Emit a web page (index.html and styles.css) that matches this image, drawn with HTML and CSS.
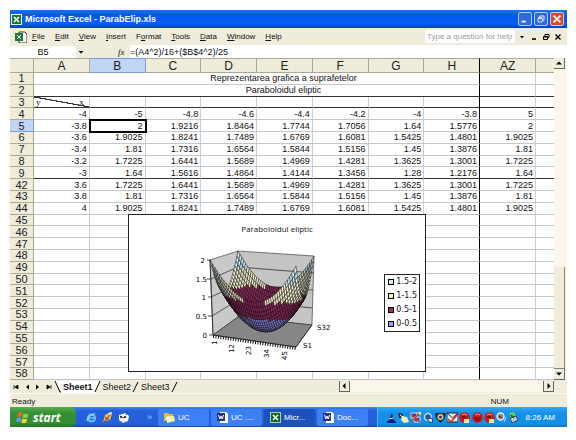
FILE: index.html
```html
<!DOCTYPE html>
<html lang="en">
<head>
    <meta charset="UTF-8">
    <meta name="viewport" content="width=device-width, initial-scale=1.0">
    <title>Microsoft Excel - ParabElip.xls</title>
    <link rel="stylesheet" href="styles.css">
</head>
<body>
    <div class="screen">
        <header class="title-bar">
            <svg class="icon" viewBox="0 0 11 11"><rect width="11" height="11" fill="#e8f4e4"/><rect x="1" y="1" width="9" height="9" fill="#1c7a34"/><path d="M3 3l5 5M8 3L3 8" stroke="#fff" stroke-width="1.6"/></svg>
            <h1>Microsoft Excel - ParabElip.xls</h1>
            <button class="win-btn" aria-label="Minimize"><svg viewBox="0 0 14 14"><path d="M3 10h5" stroke="#fff" stroke-width="2"/></svg></button>
            <button class="win-btn" aria-label="Restore"><svg viewBox="0 0 14 14"><path d="M5.500 5V3.500h5v5H9M3.500 6.500h5v4h-5zM3.500 5.500h5" fill="none" stroke="#fff"/></svg></button>
            <button class="win-btn close" aria-label="Close"><svg viewBox="0 0 14 14"><path d="M3 3l8 8M11 3l-8 8" stroke="#fff" stroke-width="2"/></svg></button>
        </header>

        <nav class="menu-bar">
            <svg class="icon" viewBox="0 0 12 12"><path d="M4 1h6l2 2v9H4z" fill="#fff" stroke="#333"/><rect y="2" width="8" height="8" fill="#1c7a34"/><path d="M2 4l4 4M6 4L2 8" stroke="#fff"/></svg>
            <button><u>F</u>ile</button>
            <button><u>E</u>dit</button>
            <button><u>V</u>iew</button>
            <button><u>I</u>nsert</button>
            <button>F<u>o</u>rmat</button>
            <button><u>T</u>ools</button>
            <button><u>D</u>ata</button>
            <button><u>W</u>indow</button>
            <button><u>H</u>elp</button>
            <input class="question" type="text" placeholder="Type a question for help" aria-label="Type a question for help">
            <button class="mini" aria-label="Show questions"><svg viewBox="0 0 8 8"><path d="M2 3h4L4 5.500z"/></svg></button>
            <button class="mini" aria-label="Minimize workbook"><svg viewBox="0 0 8 8"><path d="M2 6h4" stroke="#000" stroke-width="1.600"/></svg></button>
            <button class="mini" aria-label="Restore workbook"><svg viewBox="0 0 8 8"><path d="M3 3V1.500h4v3H6M1.500 3.500h4v3h-4zM1.500 4h4M3 1.500h4" fill="none" stroke="#000"/></svg></button>
            <button class="mini" aria-label="Close workbook"><svg viewBox="0 0 8 8"><path d="M1.500 1.500l5 5M6.500 1.500l-5 5" stroke="#000" stroke-width="1.400"/></svg></button>
        </nav>

        <div class="formula-bar">
            <input class="name-box" type="text" value="B5" aria-label="Name box">
            <button class="mini" aria-label="Show names"><svg viewBox="0 0 8 8"><path d="M1.500 3h5L4 5.500z"/></svg></button>
            <label class="fx" for="formula"><i>fx</i></label>
            <input class="formula" id="formula" type="text" value="=(A4^2)/16+($B$4^2)/25">
        </div>

        <main class="workbook">
            <div class="sheet">
                <table class="grid">
                    <colgroup>
                        <col class="col-head"><col><col><col><col><col><col><col><col><col><col class="col-rest">
                    </colgroup>
                    <thead>
                        <tr><th></th><th>A</th><th class="active">B</th><th>C</th><th>D</th><th>E</th><th>F</th><th>G</th><th class="freeze">H</th><th>AZ</th><th></th></tr>
                    </thead>
                    <tbody>
                        <tr><th>1</th><td class="merged freeze" colspan="8">Reprezentarea grafica a suprafetelor</td><td></td><td></td></tr>
                        <tr class="line"><th>2</th><td class="merged freeze" colspan="8">Paraboloidul eliptic</td><td></td><td></td></tr>
                        <tr class="line"><th>3</th><td class="corner"><div><span>y</span><span>x</span></div></td><td></td><td></td><td></td><td></td><td></td><td></td><td class="freeze"></td><td></td><td></td></tr>
                        <tr><th>4</th><td>-4</td><td>-5</td><td>-4.8</td><td>-4.6</td><td>-4.4</td><td>-4.2</td><td>-4</td><td class="freeze">-3.8</td><td>5</td><td></td></tr>
                        <tr><th class="active">5</th><td>-3.8</td><td class="selected">2</td><td>1.9216</td><td>1.8464</td><td>1.7744</td><td>1.7056</td><td>1.64</td><td class="freeze">1.5776</td><td>2</td><td></td></tr>
                        <tr><th>6</th><td>-3.6</td><td>1.9025</td><td>1.8241</td><td>1.7489</td><td>1.6769</td><td>1.6081</td><td>1.5425</td><td class="freeze">1.4801</td><td>1.9025</td><td></td></tr>
                        <tr><th>7</th><td>-3.4</td><td>1.81</td><td>1.7316</td><td>1.6564</td><td>1.5844</td><td>1.5156</td><td>1.45</td><td class="freeze">1.3876</td><td>1.81</td><td></td></tr>
                        <tr><th>8</th><td>-3.2</td><td>1.7225</td><td>1.6441</td><td>1.5689</td><td>1.4969</td><td>1.4281</td><td>1.3625</td><td class="freeze">1.3001</td><td>1.7225</td><td></td></tr>
                        <tr class="line"><th>9</th><td>-3</td><td>1.64</td><td>1.5616</td><td>1.4864</td><td>1.4144</td><td>1.3456</td><td>1.28</td><td class="freeze">1.2176</td><td>1.64</td><td></td></tr>
                        <tr><th>42</th><td>3.6</td><td>1.7225</td><td>1.6441</td><td>1.5689</td><td>1.4969</td><td>1.4281</td><td>1.3625</td><td class="freeze">1.3001</td><td>1.7225</td><td></td></tr>
                        <tr><th>43</th><td>3.8</td><td>1.81</td><td>1.7316</td><td>1.6564</td><td>1.5844</td><td>1.5156</td><td>1.45</td><td class="freeze">1.3876</td><td>1.81</td><td></td></tr>
                        <tr><th>44</th><td>4</td><td>1.9025</td><td>1.8241</td><td>1.7489</td><td>1.6769</td><td>1.6081</td><td>1.5425</td><td class="freeze">1.4801</td><td>1.9025</td><td></td></tr>
                        <tr><th>45</th><td></td><td></td><td></td><td></td><td></td><td></td><td></td><td class="freeze"></td><td></td><td></td></tr>
                        <tr><th>46</th><td></td><td></td><td></td><td></td><td></td><td></td><td></td><td class="freeze"></td><td></td><td></td></tr>
                        <tr><th>47</th><td></td><td></td><td></td><td></td><td></td><td></td><td></td><td class="freeze"></td><td></td><td></td></tr>
                        <tr><th>48</th><td></td><td></td><td></td><td></td><td></td><td></td><td></td><td class="freeze"></td><td></td><td></td></tr>
                        <tr><th>49</th><td></td><td></td><td></td><td></td><td></td><td></td><td></td><td class="freeze"></td><td></td><td></td></tr>
                        <tr><th>50</th><td></td><td></td><td></td><td></td><td></td><td></td><td></td><td class="freeze"></td><td></td><td></td></tr>
                        <tr><th>51</th><td></td><td></td><td></td><td></td><td></td><td></td><td></td><td class="freeze"></td><td></td><td></td></tr>
                        <tr><th>52</th><td></td><td></td><td></td><td></td><td></td><td></td><td></td><td class="freeze"></td><td></td><td></td></tr>
                        <tr><th>53</th><td></td><td></td><td></td><td></td><td></td><td></td><td></td><td class="freeze"></td><td></td><td></td></tr>
                        <tr><th>54</th><td></td><td></td><td></td><td></td><td></td><td></td><td></td><td class="freeze"></td><td></td><td></td></tr>
                        <tr><th>55</th><td></td><td></td><td></td><td></td><td></td><td></td><td></td><td class="freeze"></td><td></td><td></td></tr>
                        <tr><th>56</th><td></td><td></td><td></td><td></td><td></td><td></td><td></td><td class="freeze"></td><td></td><td></td></tr>
                        <tr><th>57</th><td></td><td></td><td></td><td></td><td></td><td></td><td></td><td class="freeze"></td><td></td><td></td></tr>
                        <tr><th>58</th><td></td><td></td><td></td><td></td><td></td><td></td><td></td><td class="freeze"></td><td></td><td></td></tr>
                    </tbody>
                </table>

                <figure class="chart">
                    <figcaption>Paraboloidul eliptic</figcaption>
                    <div class="chart-body">
                        <svg class="plot" viewBox="0 0 150 115">
                            <!-- walls and floor -->
                            <path d="M20 14L48 5V71L23 89z" fill="#c9c9c9" stroke="#444" stroke-width=".7"/>
                            <path d="M48 5L124 10L122 79L48 71z" fill="#c4c4c4" stroke="#444" stroke-width=".7"/>
                            <path d="M23 89L48 71L122 79L106 101z" fill="#868686" stroke="#333" stroke-width=".7"/>
                            <path d="M22 70L48 54L122 62M21 51L48 38L123 44M21 33L48 21L124 27" fill="none" stroke="#333" stroke-width=".8"/>
                            <g id="surface"></g>
                            <path d="M20 14L23 89L106 101L122 79M17 14h4M17 33h4M18 51h4M18 70h4M19 89h4" fill="none" stroke="#222" stroke-width=".8"/>
                            <path d="M23 90.500L106 102.500" stroke="#111" stroke-width="3" stroke-dasharray="1 1.500"/>
                            <g class="axis">
                                <text x="15" y="17" text-anchor="end">2</text>
                                <text x="17" y="36" text-anchor="end">1.5</text>
                                <text x="16" y="54" text-anchor="end">1</text>
                                <text x="17" y="73" text-anchor="end">0.5</text>
                                <text x="17" y="92" text-anchor="end">0</text>
                                <text transform="translate(27 99) rotate(-90)">1</text>
                                <text transform="translate(44 107) rotate(-90)">12</text>
                                <text transform="translate(61 109) rotate(-90)">23</text>
                                <text transform="translate(79 112) rotate(-90)">34</text>
                                <text transform="translate(97 114) rotate(-90)">45</text>
                                <text x="113" y="102">S1</text>
                                <text x="127" y="84">S32</text>
                            </g>
                        </svg>
                        <ul class="legend">
                            <li><span class="key k4"></span>1.5-2</li>
                            <li><span class="key k3"></span>1-1.5</li>
                            <li><span class="key k2"></span>0.5-1</li>
                            <li><span class="key k1"></span>0-0.5</li>
                        </ul>
                    </div>
                </figure>
            </div>
            <div class="v-scroll">
                <button class="scroll-btn" aria-label="Scroll up"><svg viewBox="0 0 8 8"><path d="M1 5.500h6L4 2.500z"/></svg></button>
                <div class="v-track"><div class="v-thumb"></div></div>
                <button class="scroll-btn" aria-label="Scroll down"><svg viewBox="0 0 8 8"><path d="M1 2.500h6L4 5.500z"/></svg></button>
            </div>
        </main>

        <div class="tab-bar">
            <button class="mini" aria-label="First sheet"><svg viewBox="0 0 8 8"><path d="M2 2v4M6 2v4L3 4z" stroke="#000" stroke-width=".8"/></svg></button>
            <button class="mini" aria-label="Previous sheet"><svg viewBox="0 0 8 8"><path d="M6 1.500v5L3 4z"/></svg></button>
            <button class="mini" aria-label="Next sheet"><svg viewBox="0 0 8 8"><path d="M2 1.500v5L5 4z"/></svg></button>
            <button class="mini" aria-label="Last sheet"><svg viewBox="0 0 8 8"><path d="M6 2v4M2 2v4L5 4z" stroke="#000" stroke-width=".8"/></svg></button>
            <svg class="slant" viewBox="0 0 7 12"><path d="M0 0h7v12z" fill="#fff"/><path d="M1 0l5 11h1" fill="none" stroke="#000"/></svg>
            <button class="tab current">Sheet1</button>
            <svg class="slant" viewBox="0 0 7 12"><path d="M0 0h6L1 12H0z" fill="#fff"/><path d="M6 0L1 11" stroke="#000"/></svg>
            <button class="tab">Sheet2</button>
            <svg class="slant" viewBox="0 0 7 12"><path d="M6 1L1 11" stroke="#000"/></svg>
            <button class="tab">Sheet3</button>
            <svg class="slant" viewBox="0 0 7 12"><path d="M6 1L1 11" stroke="#000"/></svg>
            <div class="h-scroll">
                <button class="scroll-btn" aria-label="Scroll left"><svg viewBox="0 0 8 8"><path d="M5.500 1v6L2.500 4z"/></svg></button>
                <div class="h-track"></div>
                <button class="scroll-btn" aria-label="Scroll right"><svg viewBox="0 0 8 8"><path d="M2.500 1v6L5.500 4z"/></svg></button>
            </div>
        </div>

        <div class="status-bar">
            <span>Ready</span>
            <span class="num">NUM</span>
        </div>

        <footer class="taskbar">
            <button class="start">
                <svg viewBox="0 0 14 13"><path d="M2 2q2.500-1.500 4.500 0L5.500 6Q3.500 5 1 6z" fill="#f0602c"/><path d="M7.500 2.300q2.500 1.200 5 0L11.500 6.500q-2.500 1-5 0z" fill="#8cd040"/><path d="M.8 7q2.500-1.200 4.500 0L4.300 11Q2.500 10-.2 11z" fill="#5a9cf8"/><path d="M6.300 7.400q2.500 1.200 5 0L10.300 11.500q-2.500 1-5 0z" fill="#fcd030"/></svg>
                start
            </button>
            <div class="quick">
                <svg viewBox="0 0 11 11"><circle cx="5.500" cy="6" r="3.500" fill="none" stroke="#6cc4fc" stroke-width="2"/><path d="M3 6h6" stroke="#6cc4fc" stroke-width="1.500"/><path d="M1 9Q0 5 9 1.500" fill="none" stroke="#b8e8ff"/></svg>
                <svg viewBox="0 0 11 11"><path d="M1 10l2-7 4-2 3 1-2 6-4 1z" fill="#f6b44a"/><path d="M2 10L9 2M3 5l4 3" stroke="#7a3c10"/><path d="M6 1l4-1-1 3z" fill="#fff"/></svg>
                <svg viewBox="0 0 11 11"><path d="M1 3l7-2 3 3-1 5-5 2-4-3z" fill="#f4f4f0"/><path d="M2 4l3 2 3-1M8 3l2-3" stroke="#333" fill="none"/><circle cx="3" cy="5" r="1" fill="#222"/><circle cx="7" cy="5" r="1" fill="#222"/></svg>
                <span>»</span>
            </div>
            <button class="task">
                <svg viewBox="0 0 11 11"><path d="M0 1h4l1 1h4v7H0z" fill="#e8b83c"/><path d="M3 4h7l1 5-8 2z" fill="#fff0a0"/><path d="M2 5h4v3H2z" fill="#fff"/></svg>UC
            </button>
            <button class="task">
                <svg viewBox="0 0 11 11"><path d="M3 0h6l2 2v9H3z" fill="#fff"/><rect y="1" width="8" height="8" fill="#26348c"/><path d="M1.500 3l1.300 4L4 4l1.200 3 1.300-4" fill="none" stroke="#fff"/></svg>UC ....
            </button>
            <button class="task pressed">
                <svg viewBox="0 0 11 11"><rect width="11" height="11" fill="#a8d8a0"/><rect x="1" y="1" width="9" height="9" fill="#14642c"/><path d="M3 3l5 5M8 3L3 8" stroke="#fff" stroke-width="1.500"/></svg>Micr...
            </button>
            <button class="task">
                <svg viewBox="0 0 11 11"><path d="M3 0h6l2 2v9H3z" fill="#fff"/><rect y="1" width="8" height="8" fill="#26348c"/><path d="M1.500 3l1.300 4L4 4l1.200 3 1.300-4" fill="none" stroke="#fff"/></svg>Doc...
            </button>
            <div class="tray">
                <svg viewBox="0 0 11 11"><path d="M2 11l1-4 3-6 1 5 2 5z" fill="#101c80"/><path d="M1 10h9" stroke="#101c80" stroke-width="2"/><path d="M3 7l4-1" stroke="#fff"/></svg>
                <svg viewBox="0 0 11 11"><path d="M0 1l5 1v4H1z" fill="#333"/><path d="M4 4l5 1 2 5-5 1-3-3z" fill="#f4f0a8"/><path d="M2 3l4 3" stroke="#fff"/></svg>
                <svg viewBox="0 0 11 11"><path d="M1 1h6v5H1zM4 5h6v5H4z" fill="#3048b0" stroke="#dde"/><path d="M1 10L10 1M1 2l9 8" stroke="#e83020" stroke-width="1.200"/><path d="M7 0h4v4z" fill="#fce040"/></svg>
                <svg viewBox="0 0 11 11"><circle cx="5" cy="5" r="3.500" fill="#2050b8" stroke="#b8dcf8" stroke-width="1.500"/><path d="M5 6l5 1-1 4-4-2z" fill="#d8e8f4" stroke="#246"/></svg>
                <svg viewBox="0 0 11 11"><path d="M0 1h11L10 6l-4.500 5L1 6z" fill="#1c2c50"/><circle cx="5.500" cy="5" r="3" fill="#e8d050"/><circle cx="5.500" cy="5" r="1.600" fill="#1838c0"/></svg>
                <svg viewBox="0 0 11 11"><rect y="1" width="11" height="9" fill="#eee" stroke="#222"/><path d="M0 1l5.500 5L11 1" fill="none" stroke="#222"/><path d="M1 7l3 3 7-8" fill="none" stroke="#e01818" stroke-width="1.300"/></svg>
                <svg viewBox="0 0 11 11"><circle cx="5.500" cy="5.500" r="5.200" fill="#c81818"/><path d="M3 3q2-2 5 0" stroke="#f8a090" fill="none"/><path d="M5 7h5v4H5z" fill="#f8e890"/><path d="M3 5h4" stroke="#400"/></svg>
                <svg viewBox="0 0 11 11"><circle cx="5.500" cy="5.500" r="5.200" fill="#c81818"/><path d="M3 3q2-2 5 0" stroke="#f8a090" fill="none"/><path d="M2 6h7M3 8h5" stroke="#600"/></svg>
                <svg viewBox="0 0 11 11"><circle cx="5.500" cy="5.500" r="5.200" fill="#c81818"/><path d="M3 3q2-2 5 0" stroke="#f8a090" fill="none"/><path d="M5 7h5v4H5z" fill="#f8e890"/><path d="M3 5h4" stroke="#400"/></svg>
                <svg viewBox="0 0 11 11"><circle cx="4.500" cy="4.500" r="3.500" fill="#888" stroke="#e4e4e4" stroke-width="1.500"/><path d="M3 4l3 2" stroke="#222"/><path d="M8 10l2-5" stroke="#b8e0ff"/></svg>
                <svg viewBox="0 0 11 11"><path d="M1 1l5-1 2 4-5 2z" fill="#60d060"/><path d="M2 6l6-2 2 4-6 3z" fill="#c8ccd0" stroke="#345"/><path d="M3 3l3 3" stroke="#186018" stroke-width="1.500"/></svg>
                <time>8:26 AM</time>
            </div>
        </footer>
    </div>

    <script>
        // z = x^2/25 + y^2/16 drawn as a mesh, far rows first
        var surface = document.getElementById("surface");
        var cols = 40, rows = 26;
        var colors = ["#8484dc", "#8c2454", "#f2f0cc", "#cfeaf0"];

        function height(u, v) {
            var x = -5 + 10 * u;
            var y = -4 + 8 * v;
            return x * x / 25 + y * y / 16;
        }

        function mix(a, b, c, d, u, v) {
            return (1 - v) * ((1 - u) * a + u * b) + v * ((1 - u) * c + u * d);
        }

        function point(i, j) {
            var u = i / cols, v = j / rows;
            var px = mix(23, 106, 48, 122, u, v) + height(u, v) / 2 * mix(-3, 0, 0, 2, u, v);
            var py = mix(89, 101, 71, 79, u, v) - height(u, v) / 2 * mix(75, 81, 66, 69, u, v);
            return px.toFixed(1) + "," + py.toFixed(1);
        }

        var mesh = "";
        for (var j = rows - 1; j >= 0; j--) {
            for (var i = 0; i < cols; i++) {
                var z = height((i + 0.5) / cols, (j + 0.5) / rows);
                var color = colors[Math.min(3, Math.floor(z * 2))];
                mesh += `<polygon points="${point(i, j)} ${point(i + 1, j)} ${point(i + 1, j + 1)} ${point(i, j + 1)}" fill="${color}"/>`;
            }
        }
        surface.innerHTML = mesh;
    </script>
</body>
</html>
```
FILE: styles.css
```css
* {
    box-sizing: border-box;
}

body {
    margin: 0;
    padding: 10px 9px 13px 10px;
    height: 100vh;
    background-color: #fff;
    font-family: "Liberation Sans", Arial, sans-serif;
    font-size: 9px;
    color: #111;
}

button,
input {
    margin: 0;
    padding: 0;
    border: none;
    border-radius: 0;
    background: none;
    font: inherit;
    color: inherit;
    outline: none;
}

svg {
    display: block;
    flex: none;
}

.screen {
    display: flex;
    flex-direction: column;
    height: 100%;
    background-color: #efecdc;
}

/* title bar */
.title-bar {
    display: flex;
    align-items: center;
    gap: 2px;
    height: 18px;
    padding: 0 3px 0 1px;
    background: linear-gradient(#1474f4, #0458ec 30%, #0560f4 75%, #0440c0);
    color: #fff;
}

.title-bar h1 {
    flex: 1;
    margin: 0 0 0 1px;
    font-size: 9px;
    font-weight: bold;
}

.icon {
    width: 11px;
    height: 11px;
}

.win-btn {
    width: 14px;
    height: 14px;
    border: 1px solid #b4ccf8;
    border-radius: 2px;
    background-color: #2f68e0;
}

.win-btn svg {
    width: 12px;
    height: 12px;
}

.win-btn.close {
    background-color: #dc4a24;
}

/* menu */
.menu-bar {
    display: flex;
    align-items: center;
    gap: 10px;
    height: 17px;
    padding: 0 4px 0 5px;
    font-size: 8px;
}

.menu-bar .icon {
    width: 12px;
    height: 12px;
    margin-right: -5px;
}

.menu-bar .mini {
    margin-left: -8px;
}

.question {
    width: 90px;
    height: 13px;
    margin-left: auto;
    padding-left: 2px;
    background-color: #fff;
}

.question::placeholder {
    color: #999;
}

.mini {
    width: 10px;
    height: 10px;
    flex: none;
}

.mini svg {
    width: 8px;
    height: 8px;
    margin: 0 auto;
}

/* name box and formula */
.formula-bar {
    display: flex;
    align-items: center;
    height: 13px;
}

.name-box {
    width: 66px;
    height: 12px;
    background-color: #fff;
    text-align: center;
}

.fx {
    margin-left: 32px;
    width: 12px;
    font-family: "Liberation Serif", serif;
}

.formula {
    flex: 1;
    height: 13px;
    background-color: #fff;
}

/* sheet */
.workbook {
    flex: 1;
    display: flex;
    min-height: 0;
}

.sheet {
    position: relative;
    flex: 1;
    background-color: #fff;
    overflow: hidden;
}

.grid {
    width: 100%;
    height: 100%;
    table-layout: fixed;
    border-spacing: 0;
    line-height: 10px;
}

.col-head {
    width: 24px;
}

.col-rest {
    width: 18px;
}

.grid th,
.grid td {
    padding: 0;
    border-right: 1px solid #cdcfd3;
    border-bottom: 1px solid #c3c7cc;
    white-space: nowrap;
}

.grid th {
    background-color: #efecdc;
    border-color: #aca894;
    font-size: 11px;
    font-weight: normal;
    color: #222;
}

.grid thead th {
    height: 15px;
    border-top: 1px solid #aca894;
    font-size: 12px;
}

.grid td {
    padding-right: 2px;
    text-align: right;
}

.grid th:last-child,
.grid td:last-child {
    border-right: none;
}

.grid th.active {
    background-color: #c0d4f4;
    border-color: #7c9cd4;
}

.grid .freeze {
    border-right: 1px solid #000;
}

.grid .line td {
    border-bottom-color: #333;
}

.grid td.merged {
    padding-left: 56px;
    text-align: center;
}

.grid td.corner {
    padding: 0;
    background: linear-gradient(to top right, transparent 47%, #333 48%, #333 53%, transparent 54%);
}

.corner div {
    display: flex;
    justify-content: space-between;
    padding: 0 5px 0 2px;
    font-family: "Liberation Serif", serif;
}

.grid td.selected {
    outline: 2px solid #000;
    outline-offset: -1px;
}

/* chart */
.chart {
    position: absolute;
    left: 118px;
    top: 156px;
    width: 298px;
    height: 158px;
    margin: 0;
    padding-top: 8px;
    display: flex;
    flex-direction: column;
    border: 1px solid #222;
    background-color: #fff;
}

.chart figcaption {
    font-family: "Open Sans", sans-serif;
    font-size: 8px;
    line-height: 12px;
    text-align: center;
}

.chart-body {
    flex: 1;
    display: flex;
    align-items: center;
    justify-content: space-between;
    padding: 0 5px 0 61px;
}

.plot {
    width: 150px;
    height: 115px;
    overflow: visible;
}

#surface polygon {
    stroke: #111;
    stroke-width: .5px;
}

.axis {
    font-family: "DejaVu Sans", sans-serif;
    font-size: 7px;
}

.legend {
    margin: 0;
    padding: 0 2px 0 3px;
    list-style: none;
    border: 1px solid #222;
    font-family: "DejaVu Sans", sans-serif;
    font-size: 8px;
    line-height: 14px;
}

.legend li {
    display: flex;
    align-items: center;
    gap: 2px;
}

.key {
    width: 6px;
    height: 6px;
    border: 1px solid #000;
}

.k4 { background-color: #cfeaf0; }
.k3 { background-color: #f2f0b8; }
.k2 { background-color: #a02860; }
.k1 { background-color: #9c9cf4; }

/* scrollbars */
.v-scroll {
    display: flex;
    flex-direction: column;
    width: 13px;
    padding-right: 2px;
    background-color: #faf7ea;
}

.scroll-btn {
    width: 11px;
    height: 11px;
    flex: none;
    border-right: 1px solid #666;
    border-bottom: 1px solid #666;
    background-color: #efecdc;
}

.scroll-btn svg {
    width: 8px;
    height: 8px;
    margin: 0 auto;
}

.v-track {
    flex: 1;
    display: flex;
    align-items: flex-end;
}

.v-thumb {
    width: 100%;
    height: 34%;
    background-color: #efecdc;
    border-right: 1px solid #888470;
    border-bottom: 1px solid #888470;
}

/* sheet tabs */
.tab-bar {
    display: flex;
    align-items: center;
    height: 13px;
}

.tab-bar > .mini {
    width: 11px;
}

.slant {
    width: 7px;
    height: 12px;
}

.tab {
    height: 12px;
    padding: 0 1px 0 2px;
}

.tab.current {
    background-color: #fff;
    font-weight: bold;
}

.h-scroll {
    display: flex;
    width: 41%;
    margin-left: auto;
    padding-right: 13px;
}

.h-scroll .scroll-btn {
    border-left: 1px solid #666;
}

.h-track {
    flex: 1;
    background-color: #faf7ea;
}

.status-bar {
    display: flex;
    align-items: center;
    justify-content: space-between;
    height: 14px;
    padding: 2px 58px 0 2px;
    border-top: 1px solid #fbf9f0;
    font-size: 8px;
}

/* taskbar */
.taskbar {
    display: flex;
    align-items: stretch;
    gap: 2px;
    height: 20px;
    background: linear-gradient(#3c84f0, #2460dc 20%, #2460dc 85%, #1c48b0);
    color: #fff;
}

.start {
    display: flex;
    align-items: center;
    gap: 3px;
    width: 66px;
    padding-left: 6px;
    border-radius: 0 6px 6px 0;
    background: linear-gradient(#5cac50, #349034 30%, #349034 80%, #247424);
    font-family: "Open Sans", sans-serif;
    font-size: 12px;
    font-weight: bold;
    font-style: italic;
}

.start svg {
    width: 14px;
    height: 13px;
}

.quick {
    display: flex;
    align-items: center;
    gap: 5px;
    width: 78px;
    padding-left: 8px;
}

.quick svg {
    width: 11px;
    height: 11px;
}

.quick span {
    margin-left: auto;
    padding-right: 4px;
    color: #b0d0ff;
}

.task {
    display: flex;
    align-items: center;
    gap: 3px;
    width: 51px;
    margin: 2px 0 1px;
    padding-left: 6px;
    border-radius: 2px;
    background-color: #3c80f4;
    font-size: 8px;
}

.task.pressed {
    background-color: #1e50bc;
}

.task svg {
    width: 11px;
    height: 11px;
}

.tray {
    flex: 1;
    display: flex;
    align-items: center;
    justify-content: space-between;
    margin-left: 7px;
    padding: 0 12px 0 8px;
    border-left: 1px solid #48c0f8;
    background: linear-gradient(#30a8f4, #1490e8 30%, #1490e8 85%, #1070c0);
}

.tray svg {
    width: 11px;
    height: 11px;
}

.tray time {
    margin-left: 5px;
    font-size: 8px;
}
```
